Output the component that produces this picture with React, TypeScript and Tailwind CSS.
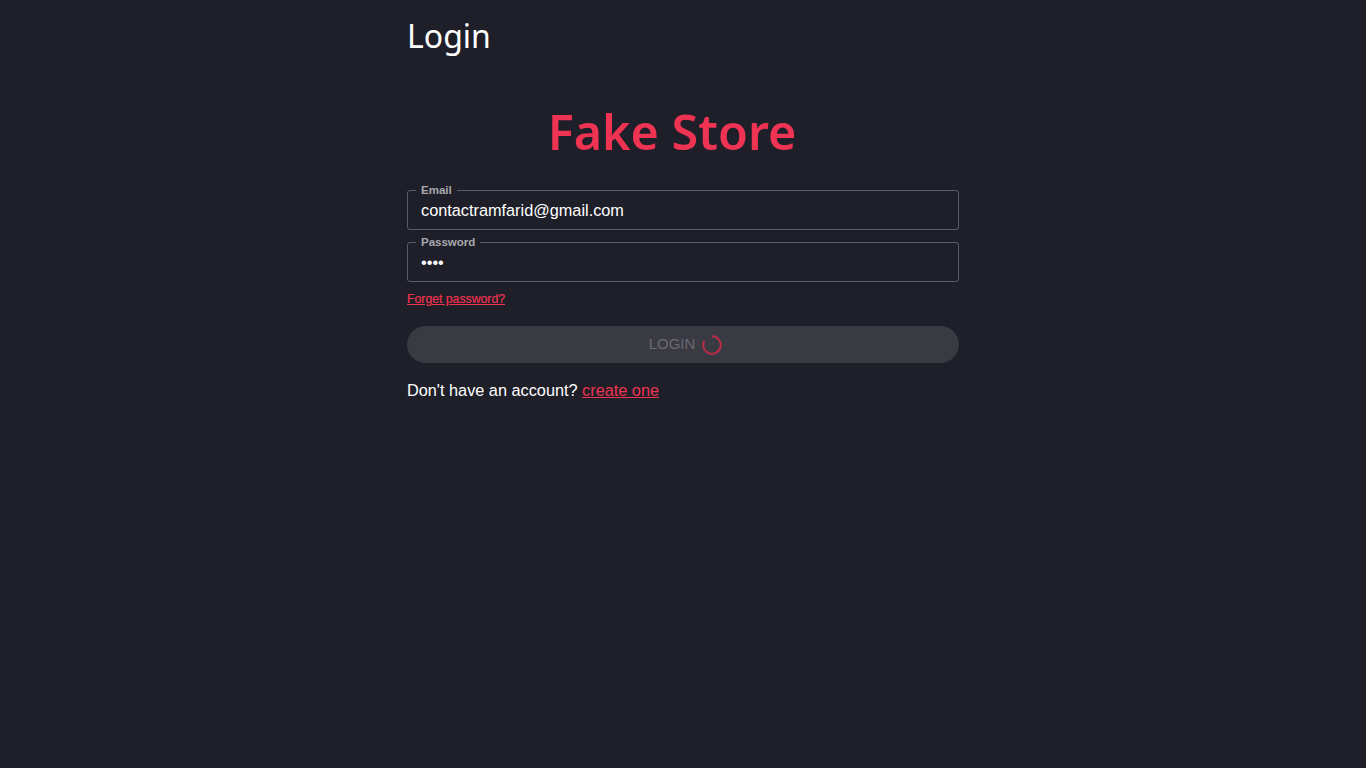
export default function App() {
  return (
    <div className="min-h-screen bg-[#1f1f29] font-['Liberation_Sans',sans-serif] text-white">
      <main className="mx-auto flex w-[552px] flex-col">
        <h1 className="mt-[13px] font-['Noto_Sans',sans-serif] text-[32px] leading-[46px]">Login</h1>
        <div className="mt-[38px] ml-[-22px] text-center font-['Noto_Sans',sans-serif] text-[48.5px] leading-[68px] font-semibold text-[#ef3352]">Fake Store</div>
        <form className="mt-[18px] flex flex-col">
          <fieldset className="h-[47px] rounded-[3px] border border-[#5c5c65] px-[8px]">
            <legend className="px-[5px] text-[11.5px] leading-[14px] font-bold text-[#a9a9ad]">Email</legend>
            <div className="px-[5px] pt-[1px] text-[16.3px] leading-[24px]">contactramfarid@gmail.com</div>
          </fieldset>
          <fieldset className="mt-[5px] h-[47px] rounded-[3px] border border-[#5c5c65] px-[8px]">
            <legend className="px-[5px] text-[11.5px] leading-[14px] font-bold text-[#a9a9ad]">Password</legend>
            <div className="px-[5px] pt-[1px] text-[16.3px] leading-[24px]">••••</div>
          </fieldset>
          <a className="mt-[10px] self-start text-[12.25px] leading-[14px] text-[#ef3352] underline [-webkit-text-stroke:0.2px_#ef3352]">Forget password?</a>
          <button type="button" className="mt-[20px] flex h-[37px] w-full items-center justify-center gap-[7px] rounded-full bg-[#3a3a43] pl-[5px] text-[15px] text-[#6a6a72]">
            <span>LOGIN</span>
            <svg width="20" height="20" viewBox="0 0 20 20" fill="none" className="block">
              <path d="M10 1.25 A8.75 8.75 0 1 1 2.43 5.62" stroke="#b92c48" strokeWidth="2" />
            </svg>
          </button>
          <p className="mt-[17px] text-[16.3px] leading-[20px]">
            Don't have an account? <a className="text-[#ef3352] underline">create one</a>
          </p>
        </form>
      </main>
    </div>
  );
}
